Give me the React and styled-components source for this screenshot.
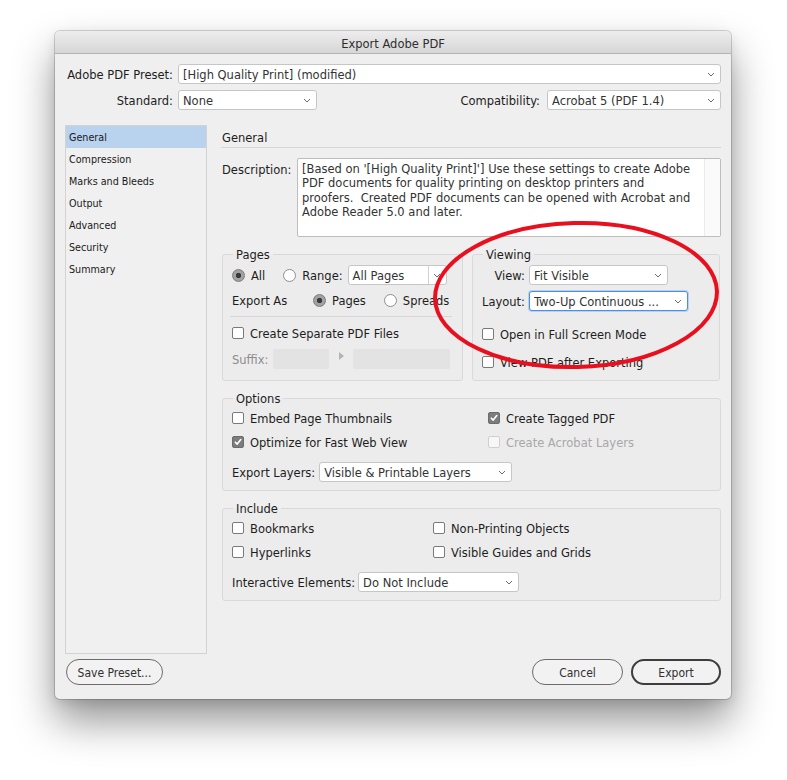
import React from "react";
import styled, { createGlobalStyle } from "styled-components";

const GlobalStyle = createGlobalStyle`
  html, body { margin: 0; padding: 0; background: #ffffff; }
  body {
    font-family: "DejaVu Sans", "Liberation Sans", sans-serif;
    font-size: 11.5px;
    color: #1d1d1d;
  }
  * { box-sizing: border-box; }
`;

const Stage = styled.div`
  width: 787px;
  height: 780px;
  padding: 31px 0 0 55px;
  background: #ffffff;
  overflow: hidden;
`;

const Window = styled.div`
  position: relative;
  width: 676px;
  height: 668px;
  background: #efefef;
  border-radius: 5px;
  box-shadow: 0 0 0 1px rgba(0, 0, 0, 0.16), 0 22px 42px rgba(0, 0, 0, 0.42),
    0 4px 12px rgba(0, 0, 0, 0.1);
  display: flex;
  flex-direction: column;
`;

const TitleBar = styled.div`
  flex: none;
  height: 23px;
  padding-top: 3px;
  border-radius: 5px 5px 0 0;
  background: linear-gradient(#ededed, #d6d6d6);
  border-bottom: 1px solid #b4b4b4;
  display: flex;
  align-items: center;
  justify-content: center;
  color: #2e2e2e;
  font-size: 11.5px;
`;

const Body = styled.div`
  flex: 1;
  display: flex;
  flex-direction: column;
  padding: 10px 10px 14px 10px;
`;

const TopRow = styled.div`
  display: flex;
  align-items: center;
  height: 20px;
  margin-top: ${(p) => p.$mt || 0}px;
`;

const RightLabel = styled.span`
  flex: none;
  width: ${(p) => p.$w}px;
  padding-top: 2px;
  text-align: right;
  margin-right: ${(p) => (p.$gap != null ? p.$gap : 5)}px;
  white-space: nowrap;
  color: ${(p) => (p.$muted ? "#8c8c8c" : "#1d1d1d")};
`;

const InlineLabel = styled.span`
  flex: none;
  width: ${(p) => (p.$w ? `${p.$w}px` : "auto")};
  padding-top: 2px;
  white-space: nowrap;
  margin-right: ${(p) => (p.$gap != null ? p.$gap : 4)}px;
  color: ${(p) => (p.$muted ? "#8c8c8c" : "#1d1d1d")};
`;

const Spacer = styled.div`
  flex: 1;
`;

const SelectBox = styled.div`
  flex: ${(p) => (p.$w ? "none" : "1")};
  width: ${(p) => (p.$w ? `${p.$w}px` : "auto")};
  height: 20px;
  display: flex;
  align-items: center;
  padding: 0 5px 0 4px;
  background: #ffffff;
  border: 1px solid ${(p) => (p.$focus ? "#4a8ee6" : "#c6c6c6")};
  box-shadow: ${(p) =>
    p.$focus ? "0 0 0 1px rgba(74, 142, 230, 0.3)" : "none"};
  border-radius: 3px;
  color: #333333;
  white-space: nowrap;
  overflow: hidden;
`;

const SelectText = styled.span`
  flex: 1;
  padding-top: 2px;
  overflow: hidden;
  white-space: nowrap;
`;

const ComboBox = styled.div`
  flex: none;
  width: ${(p) => p.$w}px;
  height: 20px;
  display: flex;
  align-items: stretch;
  background: #ffffff;
  border: 1px solid #c6c6c6;
  border-radius: 3px;
  color: #333333;
`;

const ComboText = styled.span`
  flex: 1;
  display: flex;
  align-items: center;
  padding: 2px 0 0 4px;
  white-space: nowrap;
`;

const ComboButton = styled.span`
  flex: none;
  width: 18px;
  border-left: 1px solid #d2d2d2;
  display: flex;
  align-items: center;
  justify-content: center;
`;

const Chevron = () => (
  <svg width="8" height="5" viewBox="0 0 8 5" style={{ flex: "none" }}>
    <polyline
      points="1,1 4,4 7,1"
      fill="none"
      stroke="#6a6a6a"
      strokeWidth="1"
    />
  </svg>
);

const Select = ({ w, focus, children }) => (
  <SelectBox $w={w} $focus={focus}>
    <SelectText>{children}</SelectText>
    <Chevron />
  </SelectBox>
);

const Main = styled.div`
  flex: none;
  height: 529px;
  margin-top: 15px;
  display: flex;
  gap: 14px;
`;

const Sidebar = styled.div`
  flex: none;
  width: 142px;
  border: 1px solid #d3d3d3;
  background: #f0f0f0;
  display: flex;
  flex-direction: column;
`;

const NavItem = styled.div`
  height: 22px;
  display: flex;
  align-items: center;
  padding-left: 3px;
  font-size: 9.6px;
  color: #1a1a1a;
  background: ${(p) => (p.$active ? "#b9d2ee" : "transparent")};
`;

const Panel = styled.div`
  flex: 1;
  display: flex;
  flex-direction: column;
`;

const SectionTitle = styled.div`
  height: 23px;
  display: flex;
  align-items: center;
  padding-left: 1px;
  padding-top: 3px;
  border-bottom: 1px solid #d6d6d6;
`;

const DescRow = styled.div`
  display: flex;
  margin-top: 10px;
  padding-left: 1px;
`;

const DescLabel = styled.span`
  flex: none;
  width: 75px;
  padding-top: 5px;
`;

const DescBox = styled.div`
  flex: 1;
  height: 79px;
  display: flex;
  background: #ffffff;
  border: 1px solid #bdbdbd;
  border-radius: 2px;
`;

const DescText = styled.div`
  flex: 1;
  padding: 2.5px 0 0 4px;
  line-height: 14.6px;
  color: #333333;
  white-space: pre;
  overflow: hidden;
`;

const ScrollTrack = styled.div`
  flex: none;
  width: 16px;
  background: #fafafa;
  border-left: 1px solid #ebebeb;
`;

const GroupPair = styled.div`
  display: grid;
  grid-template-columns: 241px 248px;
  column-gap: 9px;
  margin-top: 10px;
  padding-left: 1px;
`;

const Group = styled.fieldset`
  margin: ${(p) => p.$mt || 0}px 0 0 ${(p) => p.$ml || 0}px;
  padding: 0;
  min-width: 0;
  border: 1px solid #d9d9d9;
  border-radius: 3px;
  background: rgba(0, 0, 0, 0.012);
`;

const Legend = styled.legend`
  margin-left: 10px;
  padding: 1px 3px 0;
  line-height: 14px;
  font-size: 11.5px;
  color: #1d1d1d;
`;

const GroupBody = styled.div`
  display: flex;
  flex-direction: column;
  padding: ${(p) => p.$pt}px 9px ${(p) => p.$pb}px 9px;
`;

const Row = styled.div`
  display: flex;
  align-items: center;
  height: ${(p) => p.$h || 16}px;
  margin-top: ${(p) => p.$mt || 0}px;
  white-space: nowrap;
`;

const TwoCol = styled.div`
  display: grid;
  grid-template-columns: ${(p) => p.$col}px 1fr;
  row-gap: 8px;
`;

const Separator = styled.div`
  height: 1px;
  background: #d6d6d6;
  margin: 8px 1px 0 -2px;
`;

const OptionWrap = styled.label`
  display: inline-flex;
  align-items: center;
  gap: ${(p) => p.$gap || 6}px;
  margin-right: ${(p) => p.$mr || 0}px;
  height: 16px;
  white-space: nowrap;
  color: ${(p) => (p.$disabled ? "#a8a8a8" : "#1d1d1d")};
`;

const OptionText = styled.span`
  padding-top: 2px;
`;

const RadioDot = styled.span`
  flex: none;
  width: 13px;
  height: 13px;
  border-radius: 50%;
  border: 1px solid ${(p) => (p.$on ? "#7b7b7b" : "#8e8e8e")};
  background: ${(p) =>
    p.$on
      ? "radial-gradient(circle, #3a3a3a 0, #3a3a3a 2.4px, #a2a2a2 3px)"
      : "#ffffff"};
`;

const CheckSquare = styled.span`
  flex: none;
  width: 12px;
  height: 12px;
  border-radius: 2px;
  display: flex;
  align-items: center;
  justify-content: center;
  border: 1px solid
    ${(p) => (p.$disabled ? "#d0d0d0" : p.$on ? "#6c6c6c" : "#7a7a7a")};
  background: ${(p) => (p.$on ? "#7c7c7c" : p.$disabled ? "#f7f7f7" : "#ffffff")};
`;

const Radio = ({ on, mr, children }) => (
  <OptionWrap $mr={mr}>
    <RadioDot $on={on} />
    <OptionText>{children}</OptionText>
  </OptionWrap>
);

const Check = ({ on, disabled, children }) => (
  <OptionWrap $disabled={disabled}>
    <CheckSquare $on={on} $disabled={disabled}>
      {on && (
        <svg width="8" height="8" viewBox="0 0 8 8">
          <polyline
            points="1.3,4.2 3.2,6.1 6.8,1.6"
            fill="none"
            stroke="#ffffff"
            strokeWidth="1.6"
            strokeLinecap="round"
            strokeLinejoin="round"
          />
        </svg>
      )}
    </CheckSquare>
    <OptionText>{children}</OptionText>
  </OptionWrap>
);

const DisabledField = styled.span`
  flex: none;
  width: ${(p) => p.$w}px;
  height: 20px;
  background: #e3e3e3;
  border-radius: 2px;
`;

const Arrow = styled.span`
  flex: none;
  width: 0;
  height: 0;
  margin: -6px 9px 0 10px;
  border-top: 4px solid transparent;
  border-bottom: 4px solid transparent;
  border-left: 5px solid #b4b4b4;
`;

const Footer = styled.div`
  display: flex;
  align-items: center;
  justify-content: space-between;
  margin-top: 5px;
  padding-left: 1px;
`;

const ButtonGroup = styled.div`
  display: flex;
  gap: 8px;
`;

const Button = styled.button`
  width: ${(p) => p.$w}px;
  height: 26px;
  border-radius: 13px;
  border: ${(p) => (p.$default ? "2px solid #3d3d3d" : "1px solid #6b6b6b")};
  background: #f2f2f2;
  color: #303030;
  font-family: "DejaVu Sans Condensed", "Liberation Sans Narrow", "DejaVu Sans",
    sans-serif;
  font-stretch: condensed;
  font-size: 12px;
  padding: 2px 0 0;
  cursor: default;
`;

const Annotation = styled.svg`
  position: absolute;
  left: 0;
  top: 0;
  width: 676px;
  height: 668px;
  pointer-events: none;
  overflow: visible;
`;

const navItems = [
  "General",
  "Compression",
  "Marks and Bleeds",
  "Output",
  "Advanced",
  "Security",
  "Summary",
];

const description = [
  "[Based on '[High Quality Print]'] Use these settings to create Adobe",
  "PDF documents for quality printing on desktop printers and",
  "proofers.  Created PDF documents can be opened with Acrobat and",
  "Adobe Reader 5.0 and later.",
].join("\n");

export default function App() {
  return (
    <>
      <GlobalStyle />
      <Stage>
        <Window>
          <TitleBar>Export Adobe PDF</TitleBar>
          <Body>
            <TopRow>
              <RightLabel $w={108}>Adobe PDF Preset:</RightLabel>
              <Select>[High Quality Print] (modified)</Select>
            </TopRow>
            <TopRow $mt={6}>
              <RightLabel $w={108}>Standard:</RightLabel>
              <Select w={139}>None</Select>
              <Spacer />
              <InlineLabel $gap={7}>Compatibility:</InlineLabel>
              <Select w={174}>Acrobat 5 (PDF 1.4)</Select>
            </TopRow>

            <Main>
              <Sidebar>
                {navItems.map((item, i) => (
                  <NavItem key={item} $active={i === 0}>
                    {item}
                  </NavItem>
                ))}
              </Sidebar>

              <Panel>
                <SectionTitle>General</SectionTitle>
                <DescRow>
                  <DescLabel>Description:</DescLabel>
                  <DescBox>
                    <DescText>{description}</DescText>
                    <ScrollTrack />
                  </DescBox>
                </DescRow>

                <GroupPair>
                  <Group>
                    <Legend>Pages</Legend>
                    <GroupBody $pt={3} $pb={11}>
                      <Row $h={20}>
                        <Radio on mr={18}>
                          All
                        </Radio>
                        <Radio mr={5}>Range:</Radio>
                        <ComboBox $w={99}>
                          <ComboText>All Pages</ComboText>
                          <ComboButton>
                            <Chevron />
                          </ComboButton>
                        </ComboBox>
                      </Row>
                      <Row $mt={7}>
                        <InlineLabel $w={81} $gap={0}>
                          Export As
                        </InlineLabel>
                        <Radio on mr={18}>
                          Pages
                        </Radio>
                        <Radio>Spreads</Radio>
                      </Row>
                      <Separator />
                      <Row $mt={8}>
                        <Check>Create Separate PDF Files</Check>
                      </Row>
                      <Row $h={20} $mt={8}>
                        <InlineLabel $muted $gap={5}>
                          Suffix:
                        </InlineLabel>
                        <DisabledField $w={56} />
                        <Arrow />
                        <DisabledField $w={97} />
                      </Row>
                    </GroupBody>
                  </Group>

                  <Group>
                    <Legend>Viewing</Legend>
                    <GroupBody $pt={3} $pb={10}>
                      <Row $h={20}>
                        <RightLabel $w={43} $gap={4}>
                          View:
                        </RightLabel>
                        <Select w={139}>Fit Visible</Select>
                      </Row>
                      <Row $h={20} $mt={6}>
                        <RightLabel $w={43} $gap={4}>
                          Layout:
                        </RightLabel>
                        <Select w={159} focus>
                          Two-Up Continuous ...
                        </Select>
                      </Row>
                      <Row $mt={15}>
                        <Check>Open in Full Screen Mode</Check>
                      </Row>
                      <Row $mt={12}>
                        <Check>View PDF after Exporting</Check>
                      </Row>
                    </GroupBody>
                  </Group>
                </GroupPair>

                <Group $mt={10} $ml={1}>
                  <Legend>Options</Legend>
                  <GroupBody $pt={4} $pb={8}>
                    <TwoCol $col={256}>
                      <Check>Embed Page Thumbnails</Check>
                      <Check on>Create Tagged PDF</Check>
                      <Check on>Optimize for Fast Web View</Check>
                      <Check disabled>Create Acrobat Layers</Check>
                    </TwoCol>
                    <Row $h={20} $mt={12}>
                      <InlineLabel $gap={4}>Export Layers:</InlineLabel>
                      <Select w={193}>Visible &amp; Printable Layers</Select>
                    </Row>
                  </GroupBody>
                </Group>

                <Group $mt={10} $ml={1}>
                  <Legend>Include</Legend>
                  <GroupBody $pt={4} $pb={8}>
                    <TwoCol $col={201}>
                      <Check>Bookmarks</Check>
                      <Check>Non-Printing Objects</Check>
                      <Check>Hyperlinks</Check>
                      <Check>Visible Guides and Grids</Check>
                    </TwoCol>
                    <Row $h={20} $mt={12}>
                      <InlineLabel $gap={3}>Interactive Elements:</InlineLabel>
                      <Select w={161}>Do Not Include</Select>
                    </Row>
                  </GroupBody>
                </Group>
              </Panel>
            </Main>

            <Footer>
              <Button $w={97}>Save Preset...</Button>
              <ButtonGroup>
                <Button $w={91}>Cancel</Button>
                <Button $w={90} $default>
                  Export
                </Button>
              </ButtonGroup>
            </Footer>
          </Body>

          <Annotation viewBox="0 0 676 668">
            <ellipse
              cx="521"
              cy="264"
              rx="141"
              ry="72"
              fill="none"
              stroke="#e8101e"
              strokeWidth="4"
              transform="rotate(-1.5 521 264)"
            />
          </Annotation>
        </Window>
      </Stage>
    </>
  );
}
